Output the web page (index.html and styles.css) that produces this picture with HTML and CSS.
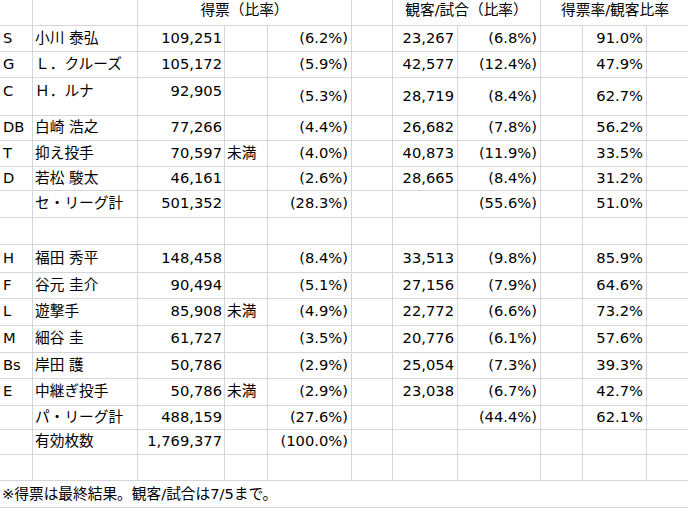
FILE: index.html
```html
<!DOCTYPE html>
<html lang="ja">
<head>
<meta charset="utf-8">
<title>得票と観客比率</title>
<link rel="stylesheet" href="styles.css">
</head>
<body>
<div class="sheet">
  <div class="row head">
    <div class="cell"></div>
    <div class="cell"></div>
    <div class="cell span3">得票（比率）</div>
    <div class="cell"></div>
    <div class="cell span2">観客/試合（比率）</div>
    <div class="cell span3 last">得票率/観客比率</div>
  </div>

  <div class="row"><div class="cell">S</div><div class="cell">小川 泰弘</div><div class="cell">109,251</div><div class="cell"></div><div class="cell">(6.2%)</div><div class="cell"></div><div class="cell">23,267</div><div class="cell">(6.8%)</div><div class="cell"></div><div class="cell">91.0%</div><div class="cell"></div></div>
  <div class="row"><div class="cell">G</div><div class="cell">Ｌ．クルーズ</div><div class="cell">105,172</div><div class="cell"></div><div class="cell">(5.9%)</div><div class="cell"></div><div class="cell">42,577</div><div class="cell">(12.4%)</div><div class="cell"></div><div class="cell">47.9%</div><div class="cell"></div></div>
  <div class="row tall"><div class="cell">C</div><div class="cell">Ｈ．ルナ</div><div class="cell">92,905</div><div class="cell"></div><div class="cell">(5.3%)</div><div class="cell"></div><div class="cell">28,719</div><div class="cell">(8.4%)</div><div class="cell"></div><div class="cell">62.7%</div><div class="cell"></div></div>
  <div class="row"><div class="cell">DB</div><div class="cell">白崎 浩之</div><div class="cell">77,266</div><div class="cell"></div><div class="cell">(4.4%)</div><div class="cell"></div><div class="cell">26,682</div><div class="cell">(7.8%)</div><div class="cell"></div><div class="cell">56.2%</div><div class="cell"></div></div>
  <div class="row"><div class="cell">T</div><div class="cell">抑え投手</div><div class="cell">70,597</div><div class="cell">未満</div><div class="cell">(4.0%)</div><div class="cell"></div><div class="cell">40,873</div><div class="cell">(11.9%)</div><div class="cell"></div><div class="cell">33.5%</div><div class="cell"></div></div>
  <div class="row"><div class="cell">D</div><div class="cell">若松 駿太</div><div class="cell">46,161</div><div class="cell"></div><div class="cell">(2.6%)</div><div class="cell"></div><div class="cell">28,665</div><div class="cell">(8.4%)</div><div class="cell"></div><div class="cell">31.2%</div><div class="cell"></div></div>
  <div class="row"><div class="cell"></div><div class="cell">セ・リーグ計</div><div class="cell">501,352</div><div class="cell"></div><div class="cell">(28.3%)</div><div class="cell"></div><div class="cell"></div><div class="cell">(55.6%)</div><div class="cell"></div><div class="cell">51.0%</div><div class="cell"></div></div>
  <div class="row"><div class="cell"></div><div class="cell"></div><div class="cell"></div><div class="cell"></div><div class="cell"></div><div class="cell"></div><div class="cell"></div><div class="cell"></div><div class="cell"></div><div class="cell"></div><div class="cell"></div></div>

  <div class="row"><div class="cell">H</div><div class="cell">福田 秀平</div><div class="cell">148,458</div><div class="cell"></div><div class="cell">(8.4%)</div><div class="cell"></div><div class="cell">33,513</div><div class="cell">(9.8%)</div><div class="cell"></div><div class="cell">85.9%</div><div class="cell"></div></div>
  <div class="row"><div class="cell">F</div><div class="cell">谷元 圭介</div><div class="cell">90,494</div><div class="cell"></div><div class="cell">(5.1%)</div><div class="cell"></div><div class="cell">27,156</div><div class="cell">(7.9%)</div><div class="cell"></div><div class="cell">64.6%</div><div class="cell"></div></div>
  <div class="row"><div class="cell">L</div><div class="cell">遊撃手</div><div class="cell">85,908</div><div class="cell">未満</div><div class="cell">(4.9%)</div><div class="cell"></div><div class="cell">22,772</div><div class="cell">(6.6%)</div><div class="cell"></div><div class="cell">73.2%</div><div class="cell"></div></div>
  <div class="row"><div class="cell">M</div><div class="cell">細谷 圭</div><div class="cell">61,727</div><div class="cell"></div><div class="cell">(3.5%)</div><div class="cell"></div><div class="cell">20,776</div><div class="cell">(6.1%)</div><div class="cell"></div><div class="cell">57.6%</div><div class="cell"></div></div>
  <div class="row"><div class="cell">Bs</div><div class="cell">岸田 護</div><div class="cell">50,786</div><div class="cell"></div><div class="cell">(2.9%)</div><div class="cell"></div><div class="cell">25,054</div><div class="cell">(7.3%)</div><div class="cell"></div><div class="cell">39.3%</div><div class="cell"></div></div>
  <div class="row"><div class="cell">E</div><div class="cell">中継ぎ投手</div><div class="cell">50,786</div><div class="cell">未満</div><div class="cell">(2.9%)</div><div class="cell"></div><div class="cell">23,038</div><div class="cell">(6.7%)</div><div class="cell"></div><div class="cell">42.7%</div><div class="cell"></div></div>
  <div class="row"><div class="cell"></div><div class="cell">パ・リーグ計</div><div class="cell">488,159</div><div class="cell"></div><div class="cell">(27.6%)</div><div class="cell"></div><div class="cell"></div><div class="cell">(44.4%)</div><div class="cell"></div><div class="cell">62.1%</div><div class="cell"></div></div>
  <div class="row"><div class="cell"></div><div class="cell">有効枚数</div><div class="cell">1,769,377</div><div class="cell"></div><div class="cell">(100.0%)</div><div class="cell"></div><div class="cell"></div><div class="cell"></div><div class="cell"></div><div class="cell"></div><div class="cell"></div></div>
  <div class="row"><div class="cell"></div><div class="cell"></div><div class="cell"></div><div class="cell"></div><div class="cell"></div><div class="cell"></div><div class="cell"></div><div class="cell"></div><div class="cell"></div><div class="cell"></div><div class="cell"></div></div>

  <div class="row foot"><div class="cell note">※得票は最終結果。観客/試合は7/5まで。</div></div>
</div>
</body>
</html>
```

FILE: styles.css
```css
html, body {
  margin: 0;
  padding: 0;
  background: #ffffff;
  overflow: hidden;
}

.sheet {
  display: grid;
  grid-template-columns: 33px 105px 87px 43px 84px 41px 65px 83px 42px 64px 42px;
  grid-template-rows: 26px 26px 26px 38px 25px 26px 24px 27px 27px 28px 26px 27px 27px 26px 27px 24px 25px 26px 27px;
  width: 689px;
  font-family: "DejaVu Sans", "Noto Sans CJK JP", sans-serif;
  font-size: 14.7px;
  line-height: 18px;
  color: #000000;
}

.row {
  display: contents;
}

.cell {
  box-sizing: border-box;
  display: flex;
  align-items: center;
  padding: 0 0 2px 0;
  white-space: nowrap;
  overflow: hidden;
  border-right: 1px solid #d2d6dd;
  border-bottom: 1px solid #d2d6dd;
}

/* column alignment */
.row > .cell:nth-child(1) { padding-left: 3px; }
.row > .cell:nth-child(2) { padding-left: 2px; }
.row > .cell:nth-child(3) { justify-content: flex-end; padding-right: 2px; }
.row > .cell:nth-child(4) { padding-left: 2px; }
.row > .cell:nth-child(5),
.row > .cell:nth-child(7),
.row > .cell:nth-child(8),
.row > .cell:nth-child(10) { justify-content: flex-end; padding-right: 3px; }
.row > .cell:nth-child(11) { border-right: none; }

/* tall row: name and vote cells sit at the top */
.row.tall > .cell:nth-child(-n+3) {
  align-items: flex-start;
  padding-top: 4px;
}

/* header row */
.row.head > .cell {
  align-items: flex-start;
  justify-content: center;
  padding: 1px 0 0 0;
}
.row.head > .span3 { grid-column: span 3; }
.row.head > .span2 { grid-column: span 2; }
.row.head > .last { border-right: none; }

/* footer note */
.row.foot > .note {
  grid-column: span 11;
  justify-content: flex-start;
  padding: 0 0 0 2px;
  border-right: none;
}
```
